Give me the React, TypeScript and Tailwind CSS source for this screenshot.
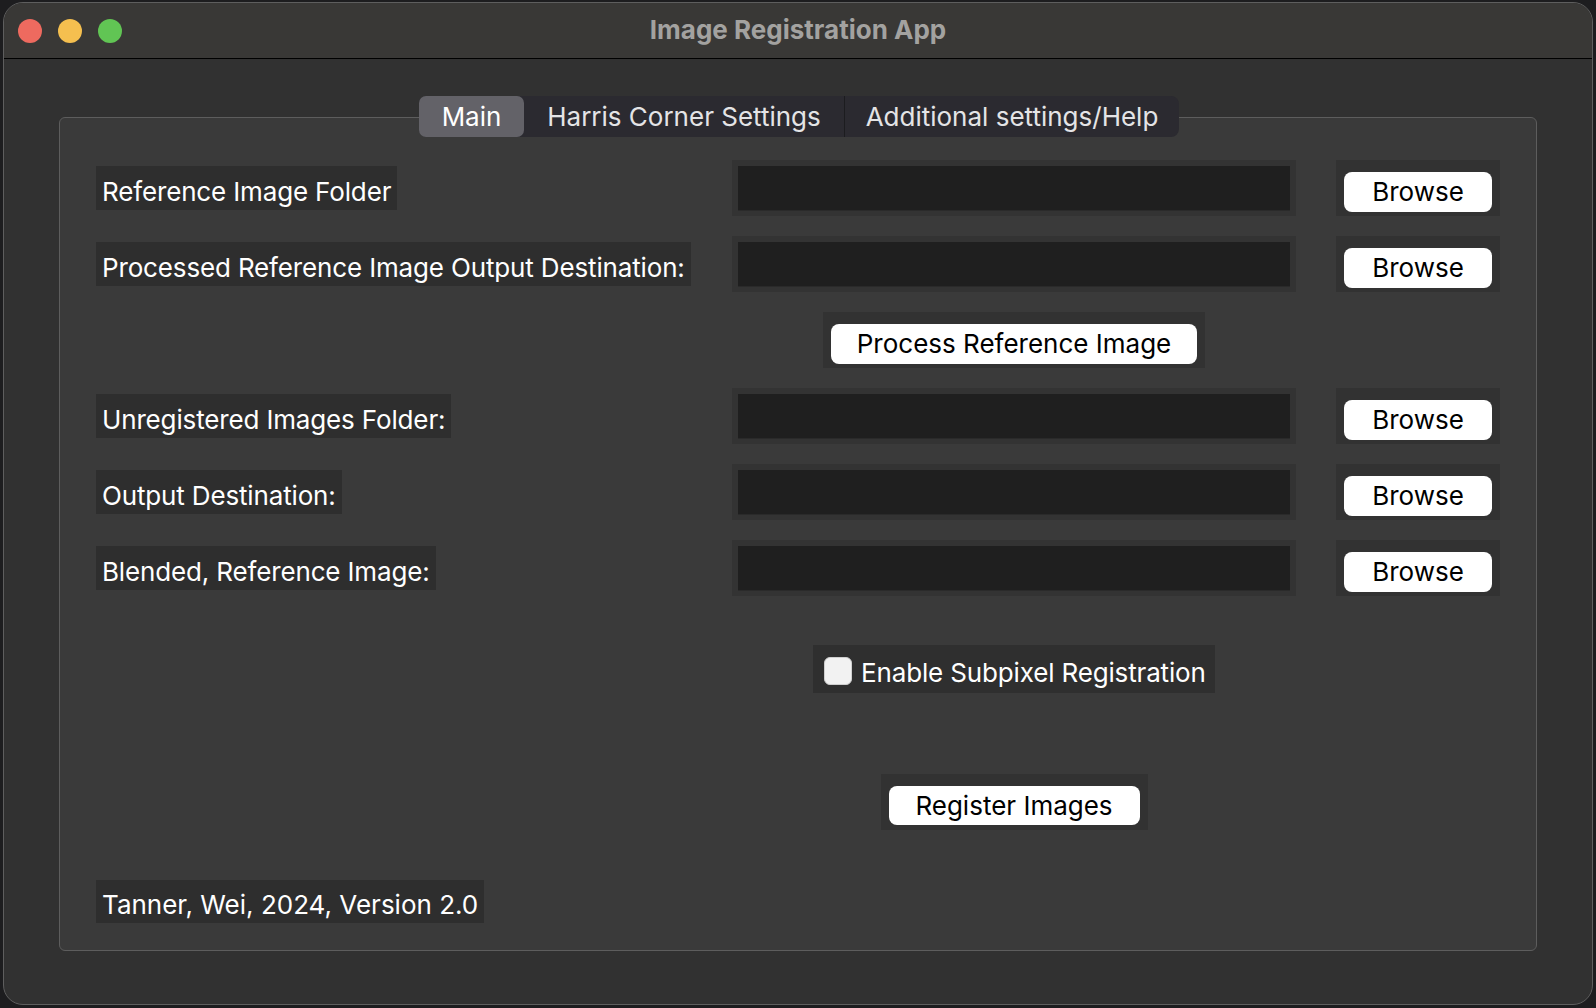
const font = { fontFamily: 'Inter, "Noto Sans", sans-serif' };

function Label({ text }: { text: string }) {
  return (
    <div className="self-center justify-self-start h-[44px] px-[6px] pt-[7px] flex items-center whitespace-nowrap bg-[#2e2e2e] text-white text-[26px] tracking-[-0.15px] leading-none">
      {text}
    </div>
  );
}

function Entry() {
  return (
    <div className="h-[56px] bg-[#333333] pt-[6px] pb-[5px] px-[6px]">
      <div className="h-full bg-[#1f1f1f] shadow-[inset_0_-1px_0_#2a2a2a]" />
    </div>
  );
}

function BrowseButton() {
  return (
    <div className="h-[56px] bg-[#323232] pt-[12px] pb-[4px] px-[8px]">
      <button className="w-full h-[40px] rounded-[8px] bg-white text-black text-[26px] leading-none">
        Browse
      </button>
    </div>
  );
}

export default function App() {
  const rows = [
    'Reference Image Folder',
    'Processed Reference Image Output Destination:',
  ];
  const rows2 = [
    'Unregistered Images Folder:',
    'Output Destination:',
    'Blended, Reference Image:',
  ];

  return (
    <div className="w-[1596px] h-[1008px] bg-[#1d1d1f] pt-[2px] px-[3px] pb-[3px]" style={font}>
      <div className="h-full rounded-[20px] border border-[#5e5e5e] bg-[#313131] overflow-hidden flex flex-col">
        {/* title bar */}
        <div className="h-[56px] shrink-0 bg-[#393836] border-b border-black flex items-center relative">
          <div className="flex gap-[16px] pl-[14px]">
            <span className="w-[24px] h-[24px] rounded-full bg-[#ee6a5f]" />
            <span className="w-[24px] h-[24px] rounded-full bg-[#f5bf4f]" />
            <span className="w-[24px] h-[24px] rounded-full bg-[#61c554]" />
          </div>
          <div className="absolute inset-0 pb-[3px] flex items-center justify-center text-[26px] font-bold text-[#a3a2a0]">
            Image Registration App
          </div>
        </div>

        {/* body */}
        <div className="flex-1 px-[55px] pt-[37px] pb-[53px] flex flex-col">
          <div className="relative z-10 flex justify-center -mb-[20px] pl-[2px]">
            <div className="h-[41px] rounded-[8px] bg-[#2b2a30] flex items-stretch text-[26px] text-[#e4e4e6] whitespace-nowrap">
              <div className="w-[105px] justify-center rounded-[7px] bg-[#636268] text-white flex items-center">Main</div>
              <div className="w-[320px] justify-center flex items-center">Harris Corner Settings</div>
              <div className="w-px bg-[#1c1c1f]" />
              <div className="w-[334px] justify-center flex items-center">Additional settings/Help</div>
            </div>
          </div>

          <div className="flex-1 rounded-[6px] border border-[#5d5d5d] bg-[#3a3a3a] px-[36px] pt-[42px] flex flex-col">
            <div className="grid grid-cols-[596px_564px_164px] gap-x-[40px] gap-y-[20px]">
              {rows.map((r) => (
                <div key={r} className="contents">
                  <Label text={r} />
                  <Entry />
                  <BrowseButton />
                </div>
              ))}
              <div className="col-start-2 justify-self-center h-[56px] w-[382px] bg-[#323232] pt-[12px] pb-[4px] px-[8px]">
                <button className="w-full h-[40px] rounded-[8px] bg-white text-black text-[26px] leading-none">
                  Process Reference Image
                </button>
              </div>
              <div />
              {rows2.map((r) => (
                <div key={r} className="contents">
                  <Label text={r} />
                  <Entry />
                  <BrowseButton />
                </div>
              ))}
            </div>

            <div className="grid grid-cols-[596px_564px_164px] gap-x-[40px] mt-[49px]">
              <div className="col-start-2 justify-self-center h-[48px] w-[402px] bg-[#2f2f2f] pl-[11px] flex items-center gap-[9px]">
                <span className="w-[28px] h-[28px] mt-[4px] rounded-[6px] bg-[#f2f2f2] border border-[#cfcfcf]" />
                <span className="text-white text-[26px] tracking-[-0.15px] leading-none pt-[7px]">Enable Subpixel Registration</span>
              </div>
            </div>

            <div className="grid grid-cols-[596px_564px_164px] gap-x-[40px] mt-[81px]">
              <div className="col-start-2 justify-self-center h-[56px] w-[267px] bg-[#323232] pt-[12px] pb-[5px] px-[8px]">
                <button className="w-full h-[39px] rounded-[8px] bg-white text-black text-[26px] leading-none">
                  Register Images
                </button>
              </div>
            </div>

            <div className="mt-[50px] self-start h-[43px] px-[6px] pt-[6px] flex items-center bg-[#2e2e2e] text-white text-[26px] leading-none">
              Tanner, Wei, 2024, Version 2.0
            </div>
          </div>
        </div>
      </div>
    </div>
  );
}
